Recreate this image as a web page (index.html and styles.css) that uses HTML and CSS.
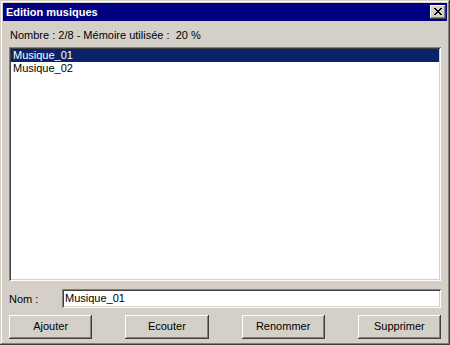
FILE: index.html
```html
<!DOCTYPE html>
<html lang="fr">
<head>
    <meta charset="UTF-8">
    <title>Edition musiques</title>
    <link rel="stylesheet" href="styles.css">
</head>
<body>
    <div class="window">
        <div class="titleBar">
            <span class="titleText">Edition musiques</span>
            <div class="btnClose">
                <svg width="8" height="7" viewBox="0 0 8 7" shape-rendering="crispEdges">
                    <path d="M0 0h2v1h-2zM6 0h2v1h-2zM1 1h2v1h-2zM5 1h2v1h-2zM2 2h4v1h-4zM3 3h2v1h-2zM2 4h4v1h-4zM1 5h2v1h-2zM5 5h2v1h-2zM0 6h2v1h-2zM6 6h2v1h-2z" fill="#000"/>
                </svg>
            </div>
        </div>
        <div class="body">
            <div class="info">Nombre : 2/8 - Mémoire utilisée : &nbsp;20 %</div>
            <ul class="list">
                <li class="selected">Musique_01</li>
                <li>Musique_02</li>
            </ul>
            <div class="nameRow">
                <label class="nameLabel">Nom :</label>
                <div class="nameInput">Musique_01</div>
            </div>
            <div class="btnRow">
                <div class="btn">Ajouter</div>
                <div class="btn">Ecouter</div>
                <div class="btn">Renommer</div>
                <div class="btn">Supprimer</div>
            </div>
        </div>
    </div>
</body>
</html>
```

FILE: styles.css
```css
body{
    margin: 0px;
    font-family: "Liberation Sans", Arial, sans-serif;
    font-size: 11px;
    color: #000;
}
ul{
    margin: 0px;
    padding-left: 0px;
    list-style: none;
}
.window{
    width: 450px;
    height: 345px;
    box-sizing: border-box;
    padding: 3px;
    background-color: #d4d0c8;
    box-shadow: inset -1px -1px #404040, inset 1px 1px #d4d0c8,
                inset -2px -2px #808080, inset 2px 2px #ffffff;
    display: flex;
    flex-direction: column;
}
.titleBar{
    height: 18px;
    background-color: #000080;
    display: flex;
    align-items: center;
    justify-content: space-between;
    padding: 0 1px 0 3px;
}
.titleText{
    color: #fff;
    font-weight: bold;
    font-size: 11px;
}
.btnClose{
    width: 16px;
    height: 14px;
    box-sizing: border-box;
    background-color: #d4d0c8;
    box-shadow: inset -1px -1px #404040, inset 1px 1px #ffffff,
                inset -2px -2px #808080;
    display: flex;
    align-items: center;
    justify-content: center;
    padding-bottom: 1px;
}
.body{
    flex: 1;
    display: flex;
    flex-direction: column;
    padding: 8px 6px 0 6px;
}
.info{
    line-height: 13px;
    height: 13px;
    padding-left: 1px;
    margin-bottom: 5px;
}
.list{
    height: 234px;
    box-sizing: border-box;
    padding: 2px;
    background-color: #fff;
    box-shadow: inset 1px 1px #808080, inset -1px -1px #ffffff,
                inset 2px 2px #404040, inset -2px -2px #d4d0c8;
}
.list>li{
    height: 13px;
    line-height: 13px;
    padding-left: 2px;
}
.list>li.selected{
    background-color: #0a246a;
    color: #fff;
}
.nameRow{
    display: flex;
    align-items: center;
    margin-top: 8px;
    height: 19px;
}
.nameLabel{
    width: 53px;
}
.nameInput{
    flex: 1;
    height: 19px;
    box-sizing: border-box;
    padding: 0 3px;
    line-height: 19px;
    background-color: #fff;
    box-shadow: inset 1px 1px #808080, inset -1px -1px #ffffff,
                inset 2px 2px #404040, inset -2px -2px #d4d0c8;
}
.btnRow{
    display: flex;
    gap: 33px;
    margin-top: 7px;
}
.btn{
    width: 84px;
    height: 24px;
    box-sizing: border-box;
    line-height: 23px;
    text-align: center;
    background-color: #d4d0c8;
    box-shadow: inset -1px -1px #404040, inset 1px 1px #ffffff,
                inset -2px -2px #808080, inset 2px 2px #d4d0c8;
}
```
